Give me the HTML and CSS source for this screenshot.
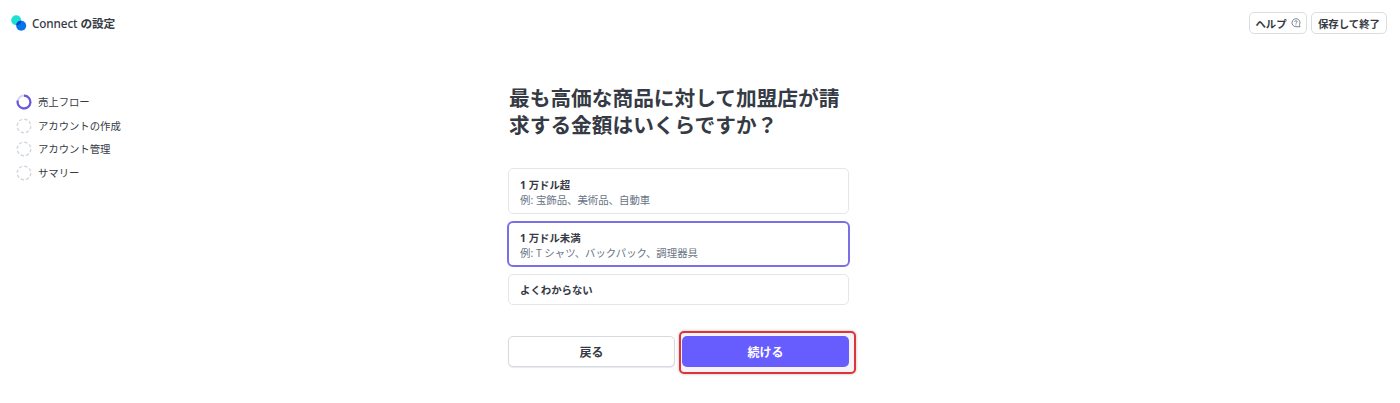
FILE: index.html
```html
<!DOCTYPE html>
<html lang="ja">
<head>
<meta charset="utf-8">
<title>Connect の設定</title>
<link rel="stylesheet" href="styles.css">
</head>
<body>
<header class="topbar">
  <div class="brand">
    <svg class="logo" width="16" height="17" viewBox="0 0 16 17"><circle cx="5.2" cy="5.3" r="5" fill="#1de0d5"/><circle cx="10.2" cy="10.7" r="5" fill="#0573ed"/><path d="M5.2 10.3A5 5 0 0 1 10.2 5.7A5 5 0 0 1 5.2 10.3Z" fill="#0048bd"/></svg>
    <span class="brand-name">Connect <b>の設定</b></span>
  </div>
  <div class="actions">
    <button class="small-btn help">ヘルプ
      <svg width="10" height="10" viewBox="0 0 11 11" fill="none" stroke="#6c7688" stroke-width="1"><path d="M10 9.6H5.4A4.4 4.4 0 1 1 9.4 7.2Q9.3 8.7 10 9.6Z"/><path d="M4 4.2C4 2.5 6.8 2.6 6.8 4.2C6.8 5.2 5.4 5.1 5.4 6.3M5.4 7.2v1"/></svg>
    </button>
    <button class="small-btn save">保存して終了</button>
  </div>
</header>
<div class="layout">
  <ol class="steps">
    <li class="step"><svg width="16" height="16" viewBox="0 0 16 16" fill="none"><circle cx="8" cy="8" r="6.4" stroke="#d5d4f5" stroke-width="2"/><path d="M8 1.6A6.4 6.4 0 1 1 1.8 6.4" stroke="#6659dc" stroke-width="2.2"/></svg><span class="step-name">売上フロー</span></li>
    <li class="step"><svg width="16" height="16" viewBox="0 0 16 16" fill="none"><circle class="pending" cx="8" cy="8" r="6.8"/></svg><span class="step-name">アカウントの作成</span></li>
    <li class="step"><svg width="16" height="16" viewBox="0 0 16 16" fill="none"><circle class="pending" cx="8" cy="8" r="6.8"/></svg><span class="step-name">アカウント管理</span></li>
    <li class="step"><svg width="16" height="16" viewBox="0 0 16 16" fill="none"><circle class="pending" cx="8" cy="8" r="6.8"/></svg><span class="step-name">サマリー</span></li>
  </ol>
  <main class="content">
    <h1 class="title">最も高価な商品に対して加盟店が請<br>求する金額はいくらですか？</h1>
    <div class="options">
      <div class="option"><div class="option-name">1 万ドル超</div><div class="option-hint">例: 宝飾品、美術品、自動車</div></div>
      <div class="option selected"><div class="option-name">1 万ドル未満</div><div class="option-hint">例: T シャツ、バックパック、調理器具</div></div>
      <div class="option single"><div class="option-name">よくわからない</div></div>
    </div>
    <div class="buttons">
      <button class="btn back">戻る</button>
      <div class="highlight"><button class="btn next">続ける</button></div>
    </div>
  </main>
</div>
</body>
</html>
```
FILE: styles.css
```css
* { box-sizing: border-box; }
body {
  margin: 0;
  width: 1400px;
  height: 403px;
  overflow: hidden;
  background: #fff;
  color: #353a44;
  font-family: "Noto Sans", "Noto Sans CJK JP", sans-serif;
  font-size: 10.4px;
}
button { font-family: inherit; color: inherit; padding: 0; margin: 0; }
.topbar {
  display: flex;
  justify-content: space-between;
  height: 46px;
  padding: 12px 13px 0 11px;
}
.brand { display: flex; gap: 5px; height: 23px; align-items: center; }
.brand-name { font-size: 11.7px; font-weight: 500; line-height: 23px; letter-spacing: -0.1px; }
.actions { display: flex; gap: 4px; }
.small-btn {
  display: flex;
  align-items: center;
  justify-content: center;
  gap: 4px;
  height: 22px;
  border: 1px solid #d8dee4;
  border-radius: 5px;
  background: #fff;
  font-size: 10.4px;
  font-weight: 700;
}
.help { width: 58px; }
.save { width: 76px; }
.layout { display: flex; }
.steps { list-style: none; margin: 0; padding: 44px 0 0 16px; width: 508px; }
.step { display: flex; align-items: center; gap: 6px; height: 23.7px; line-height: 23px; font-size: 10.4px; }
.step-name { padding-top: 1px; letter-spacing: -0.05px; }
.pending { stroke: #d3d8df; stroke-width: 1.4; stroke-dasharray: 3.4 1.94; }
.content { width: 349px; padding-top: 39px; }
.title { margin: 0; padding-left: 1px; font-size: 20.7px; line-height: 26.5px; font-weight: 700; white-space: nowrap; }
.options { display: flex; flex-direction: column; gap: 7px; width: 342px; margin-top: 30px; }
.option {
  width: 341px;
  height: 46px;
  padding: 9px 11px 0;
  border: 1px solid #e3e6ea;
  border-radius: 5px;
  line-height: 15px;
  white-space: nowrap;
}
.selected {
  width: 343px;
  margin-left: -1px;
  padding: 8px 11px 0;
  border: 2px solid #7a6fe4;
  border-radius: 6px;
}
.single { height: 31px; padding-top: 8px; }
.option-name { font-weight: 700; }
.option-hint { color: #687385; }
.buttons { display: flex; gap: 4px; margin-top: 26px; }
.btn { height: 31px; border-radius: 5px; font-size: 12px; font-weight: 700; }
.back { width: 167px; margin-top: 5px; border: 1px solid #d5dae1; background: #fff; box-shadow: 0 1px 1px #e7e9ed; }
.highlight {
  width: 177px;
  height: 43px;
  padding: 3px 0 0 1px;
  border: 2px solid #df3336;
  border-radius: 5px;
  background: #f8f3f6;
  box-shadow: 0 0 3px #bfb5b8;
  flex: none;
}
.next { display: block; width: 167px; height: 31px; border: 0; background: #675dff; color: #fff; }
```
